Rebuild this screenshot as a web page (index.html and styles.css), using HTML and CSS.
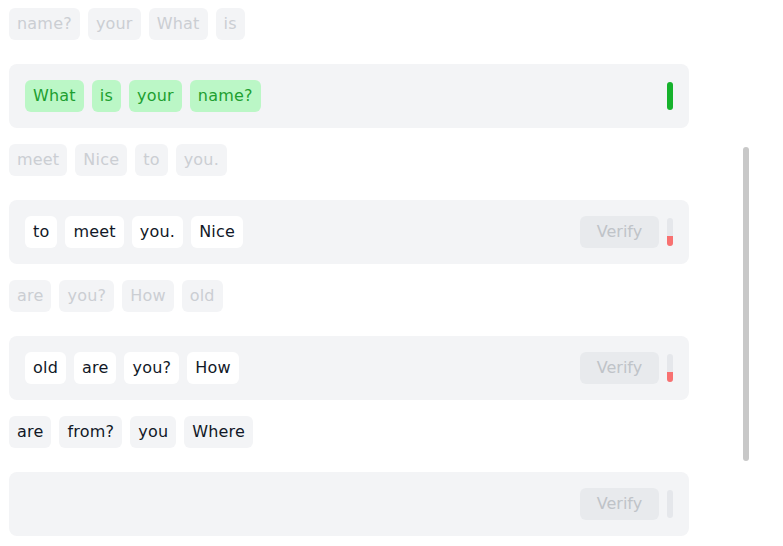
FILE: index.html
```html
<!DOCTYPE html>
<html>
<head>
<meta charset="utf-8">
<link rel="stylesheet" href="styles.css">
</head>
<body>
<div class="page">
  <div class="exercise">
    <div class="bank">
      <span class="chip faded">name?</span><span class="chip faded">your</span><span class="chip faded">What</span><span class="chip faded">is</span>
    </div>
    <div class="panel">
      <div class="answer">
        <span class="chip correct">What</span><span class="chip correct">is</span><span class="chip correct">your</span><span class="chip correct">name?</span>
      </div>
      <div class="meter"><div class="fill green" style="height:100%"></div></div>
    </div>
  </div>

  <div class="exercise">
    <div class="bank">
      <span class="chip faded">meet</span><span class="chip faded">Nice</span><span class="chip faded">to</span><span class="chip faded">you.</span>
    </div>
    <div class="panel">
      <div class="answer">
        <span class="chip placed">to</span><span class="chip placed">meet</span><span class="chip placed">you.</span><span class="chip placed">Nice</span>
      </div>
      <button class="verify">Verify</button>
      <div class="meter"><div class="fill red" style="height:36%"></div></div>
    </div>
  </div>

  <div class="exercise">
    <div class="bank">
      <span class="chip faded">are</span><span class="chip faded">you?</span><span class="chip faded">How</span><span class="chip faded">old</span>
    </div>
    <div class="panel">
      <div class="answer">
        <span class="chip placed">old</span><span class="chip placed">are</span><span class="chip placed">you?</span><span class="chip placed">How</span>
      </div>
      <button class="verify">Verify</button>
      <div class="meter"><div class="fill red" style="height:36%"></div></div>
    </div>
  </div>

  <div class="exercise">
    <div class="bank">
      <span class="chip">are</span><span class="chip">from?</span><span class="chip">you</span><span class="chip">Where</span>
    </div>
    <div class="panel">
      <div class="answer"></div>
      <button class="verify">Verify</button>
      <div class="meter"><div class="fill red" style="height:0%"></div></div>
    </div>
  </div>
</div>
<div class="scroll-thumb"></div>
</body>
</html>
```

FILE: styles.css
```css
html, body {
  margin: 0;
  padding: 0;
  background: #ffffff;
  overflow: hidden;
}
body {
  font-family: "DejaVu Sans", "Liberation Sans", sans-serif;
  font-size: 16px;
  color: #111827;
}
.page {
  width: 680px;
  padding: 8px 0 0 9px;
  display: flex;
  flex-direction: column;
  gap: 16px;
}
.exercise {
  display: flex;
  flex-direction: column;
  gap: 24px;
}
.bank, .answer {
  display: flex;
  gap: 8px;
  height: 32px;
}
.answer {
  flex: 1;
}
.chip {
  display: inline-flex;
  align-items: center;
  height: 32px;
  padding: 0 8px 1px;
  border-radius: 6px;
  background: #f3f4f6;
  color: #111827;
  line-height: 1;
  letter-spacing: 0.2px;
  box-sizing: border-box;
}
.chip.faded {
  color: #cbced3;
}
.chip.placed {
  background: #ffffff;
}
.chip.correct {
  background: #bbf7c6;
  color: #1e9f30;
}
.panel {
  display: flex;
  align-items: center;
  height: 64px;
  box-sizing: border-box;
  padding: 0 16px;
  background: #f3f4f6;
  border-radius: 8px;
}
.verify {
  width: 79px;
  height: 32px;
  border: none;
  border-radius: 6px;
  background: #e8eaed;
  color: #bfc3c8;
  font-family: inherit;
  font-size: 16px;
  padding: 0 0 1px;
  margin-right: 8px;
}
.meter {
  width: 6px;
  height: 28px;
  border-radius: 3px;
  background: #e5e7eb;
  display: flex;
  flex-direction: column;
  justify-content: flex-end;
  overflow: hidden;
}
.fill.green { background: #16b22c; }
.fill.red { background: #f87171; }
.scroll-thumb {
  position: absolute;
  left: 743px;
  top: 147px;
  width: 6px;
  height: 314px;
  border-radius: 3px;
  background: #c8c8c8;
}
```
